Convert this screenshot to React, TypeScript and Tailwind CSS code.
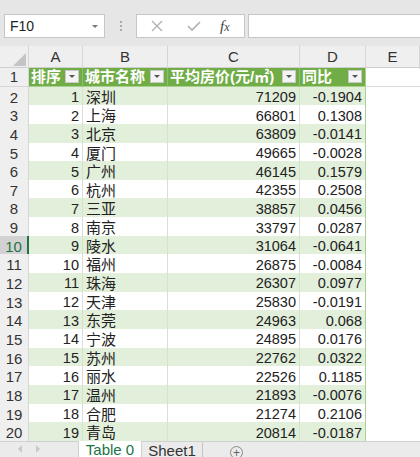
import React from 'react';

const rows: [number, string, number, string][] = [
  [1, '深圳', 71209, '-0.1904'],
  [2, '上海', 66801, '0.1308'],
  [3, '北京', 63809, '-0.0141'],
  [4, '厦门', 49665, '-0.0028'],
  [5, '广州', 46145, '0.1579'],
  [6, '杭州', 42355, '0.2508'],
  [7, '三亚', 38857, '0.0456'],
  [8, '南京', 33797, '0.0287'],
  [9, '陵水', 31064, '-0.0641'],
  [10, '福州', 26875, '-0.0084'],
  [11, '珠海', 26307, '0.0977'],
  [12, '天津', 25830, '-0.0191'],
  [13, '东莞', 24963, '0.068'],
  [14, '宁波', 24895, '0.0176'],
  [15, '苏州', 22762, '0.0322'],
  [16, '丽水', 22526, '0.1185'],
  [17, '温州', 21893, '-0.0076'],
  [18, '合肥', 21274, '0.2106'],
  [19, '青岛', 20814, '-0.0187'],
];

const font = { fontFamily: '"Liberation Sans", "Noto Sans CJK SC", sans-serif' };
const cols = 'grid grid-cols-[29px_54px_85px_132px_66px_1fr]';

const FilterBtn = () => (
  <div className="w-[14px] h-[13px] bg-[#f4f4f4] border border-[#c8c8c8] flex items-center justify-center shrink-0">
    <div className="w-0 h-0 border-l-[3px] border-r-[3px] border-t-[3px] border-l-transparent border-r-transparent border-t-[#555]" />
  </div>
);

const HeadCell = ({ label, last }: { label: string; last?: boolean }) => (
  <div
    className={`h-[18.65px] bg-[#70ad47] text-white font-bold text-[15px] flex items-center justify-between pl-[2px] pr-[3px] border-b border-[#a9d08e] ${last ? 'border-r border-r-[#a9d08e]' : 'border-r border-r-[#8cbf6a]'}`}
  >
    <span className="leading-none whitespace-nowrap">{label}</span>
    <FilterBtn />
  </div>
);

export default function App() {
  return (
    <div className="w-[420px] h-[457px] overflow-hidden bg-white flex flex-col text-[#222]" style={font}>
      {/* formula bar */}
      <div className="h-[46px] shrink-0 bg-[#e6e6e6] flex items-start pt-[14px] pl-[4px]">
        <div className="w-[101px] h-[24px] bg-white border border-[#c6c6c6] flex items-center justify-between pl-[5px] pr-[6px]">
          <span className="text-[14px] text-[#222]">F10</span>
          <div className="w-0 h-0 border-l-[3px] border-r-[3px] border-t-[3px] border-l-transparent border-r-transparent border-t-[#777]" />
        </div>
        <div className="w-[31px] h-[24px] flex flex-col items-center justify-center gap-[2px]">
          <div className="w-[2px] h-[2px] bg-[#aaa]" />
          <div className="w-[2px] h-[2px] bg-[#aaa]" />
          <div className="w-[2px] h-[2px] bg-[#aaa]" />
        </div>
        <div className="w-[109px] h-[24px] bg-white border border-[#c6c6c6] flex items-center">
          <svg width="36" height="14" viewBox="0 0 36 14" className="ml-[3px]">
            <path d="M12 2l10 10M22 2L12 12" stroke="#b0b0b0" strokeWidth="1.3" fill="none" />
          </svg>
          <svg width="36" height="14" viewBox="0 0 36 14">
            <path d="M12 7l4 4 8-8" stroke="#b0b0b0" strokeWidth="1.6" fill="none" />
          </svg>
          <span className="ml-[8px] text-[15px] italic text-[#444]" style={{ fontFamily: '"Liberation Serif", serif' }}>
            f<span className="text-[12px]">x</span>
          </span>
        </div>
        <div className="ml-[3px] flex-1 h-[24px] bg-white border border-[#c6c6c6] border-r-0" />
      </div>

      {/* column headers */}
      <div className={`${cols} h-[22px] shrink-0 bg-[#efefef] border-b border-[#cfcfcf] text-[15px] text-[#333]`}>
        <div className="border-r border-[#d6d6d6] flex items-end justify-end pr-[2px] pb-[3px]">
          <svg width="13" height="13" viewBox="0 0 13 13">
            <path d="M13 0V13H0Z" fill="#c4c4c4" />
          </svg>
        </div>
        {['A', 'B', 'C', 'D', 'E'].map((c) => (
          <div key={c} className="border-r border-[#d6d6d6] flex items-center justify-center">
            {c}
          </div>
        ))}
      </div>

      {/* grid */}
      <div className="flex-1 overflow-hidden">
        <div className={`${cols}`}>
          <div className="h-[18.65px] bg-[#efefef] border-r border-b border-[#d6d6d6] text-[15px] text-[#333] flex items-center justify-center">1</div>
          <HeadCell label="排序" />
          <HeadCell label="城市名称" />
          <HeadCell label="平均房价(元/㎡)" />
          <HeadCell label="同比" last />
          <div className="border-b border-[#dadada]" />
        </div>
        {rows.map((r, i) => {
          const green = i % 2 === 0;
          const sel = r[0] === 9;
          const bg = green ? 'bg-[#e2efda]' : 'bg-white';
          const vline = green ? 'border-r-[#d3e4c7]' : 'border-r-[#dcdcdc]';
          return (
            <div key={r[0]} className={`${cols} h-[18.65px] text-[14.5px]`}>
              <div
                className={`flex items-center justify-center text-[15px] border-b border-b-[#d6d6d6] ${
                  sel ? 'bg-[#d2d2d2] text-[#217346] border-r-2 border-r-[#217346]' : 'bg-[#efefef] text-[#333] border-r border-r-[#d6d6d6]'
                }`}
              >
                {r[0] + 1}
              </div>
              <div className={`${bg} border-b border-b-[#a9d08e] border-r ${vline} flex items-center justify-end pr-[3px]`}>{r[0]}</div>
              <div className={`${bg} border-b border-b-[#a9d08e] border-r ${vline} flex items-center pl-[3px] text-[15px]`}>{r[1]}</div>
              <div className={`${bg} border-b border-b-[#a9d08e] border-r ${vline} flex items-center justify-end pr-[3px]`}>{r[2]}</div>
              <div className={`${bg} border-b border-b-[#a9d08e] border-r border-r-[#a9d08e] flex items-center justify-end pr-[3px]`}>{r[3]}</div>
              <div className="bg-white border-b border-[#dadada]" />
            </div>
          );
        })}
      </div>

      {/* sheet tabs */}
      <div className="h-[16px] shrink-0 bg-[#ebebeb] border-t border-[#d0d0d0] flex items-start text-[15px] relative">
        <div className="w-[78px] flex items-center pl-[18px] gap-[14px] pt-[3px]">
          <div className="w-0 h-0 border-t-[4px] border-b-[4px] border-r-[4px] border-t-transparent border-b-transparent border-r-[#c8c8c8]" />
          <div className="w-0 h-0 border-t-[4px] border-b-[4px] border-l-[4px] border-t-transparent border-b-transparent border-l-[#c8c8c8]" />
        </div>
        <div className="w-[64px] h-[18px] -mt-[1px] bg-white border-x border-[#d0d0d0] text-[#217346] flex items-start justify-center leading-none pt-[1px]">
          Table 0
        </div>
        <div className="w-[61px] h-[16px] border-r border-[#c4c4c4] text-[#333] flex items-start justify-center leading-none pt-[1px]">
          Sheet1
        </div>
        <div className="ml-[27px] mt-[4px] w-[13px] h-[13px] rounded-full border border-[#8a8a8a] flex items-center justify-center text-[#666] text-[12px] leading-none">
          +
        </div>
      </div>
    </div>
  );
}
